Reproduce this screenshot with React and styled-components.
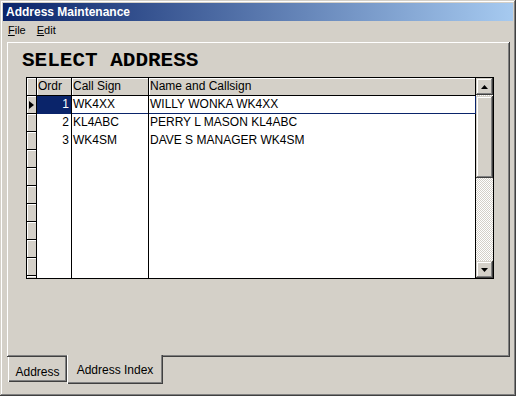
import React from "react";
import styled, { createGlobalStyle, css } from "styled-components";

const GlobalStyle = createGlobalStyle`
  html, body {
    margin: 0;
    padding: 0;
    background: #d4d0c8;
  }
  body {
    font-family: "Liberation Sans", Arial, sans-serif;
    font-size: 12px;
    color: #000;
  }
`;

const raised = css`
  box-shadow: inset -1px -1px #404040, inset 1px 1px #d4d0c8,
    inset -2px -2px #808080, inset 2px 2px #fff;
`;

const Frame = styled.div`
  width: 516px;
  height: 396px;
  box-sizing: border-box;
  padding: 3px;
  background: #d4d0c8;
  ${raised}
  display: flex;
  flex-direction: column;
`;

const TitleBar = styled.div`
  height: 18px;
  flex: none;
  padding-left: 3px;
  background: linear-gradient(to right, #0a246a, #a6caf0);
  color: #fff;
  font-weight: bold;
  font-size: 12px;
  line-height: 18px;
`;

const MenuBar = styled.div`
  height: 19px;
  flex: none;
  display: flex;
  gap: 11px;
  padding-left: 5px;
  font-size: 11px;
  line-height: 19px;
`;

const MenuItem = styled.span`
  u {
    text-decoration: underline;
  }
`;

const Body = styled.div`
  flex: 1;
  display: flex;
  flex-direction: column;
  padding: 2px 3px 0 4px;
`;

const Panel = styled.div`
  height: 315px;
  flex: none;
  box-sizing: border-box;
  padding: 8px 0 0 13px;
  box-shadow: inset -1px -1px #404040, inset 1px 1px #fff,
    inset -2px -2px #808080;
`;

const Heading = styled.h1`
  margin: 0 0 0 2px;
  font-family: "Liberation Mono", "Courier New", monospace;
  font-weight: bold;
  font-size: 21px;
  line-height: 21px;
`;

const GridBox = styled.div`
  width: 468px;
  height: 202px;
  box-sizing: border-box;
  margin: 6px 0 0 6px;
  border: 1px solid #000;
  display: flex;
  background: #fff;
`;

const Table = styled.div`
  width: 449px;
  display: grid;
  grid-template-columns: 10px 35px 77px 327px;
  grid-auto-rows: 18px;
  overflow: hidden;
  align-content: start;
`;

const HeadCell = styled.div`
  box-sizing: border-box;
  background: #d4d0c8;
  border-right: 1px solid #000;
  border-bottom: 1px solid #000;
  box-shadow: inset 1px 1px #fff;
  padding: 0 1px;
  line-height: 17px;
  white-space: nowrap;
`;

const Indicator = styled.div`
  box-sizing: border-box;
  background: #d4d0c8;
  border-right: 1px solid #000;
  border-bottom: 1px solid #000;
  box-shadow: inset 1px 1px #fff;
  display: flex;
  align-items: center;
  padding-left: 2px;
`;

const Pointer = styled.span`
  width: 0;
  height: 0;
  border-left: 5px solid #000;
  border-top: 4px solid transparent;
  border-bottom: 4px solid transparent;
`;

const Cell = styled.div`
  box-sizing: border-box;
  border-right: 1px solid ${(p) => (p.$edge ? "#0a246a" : "#000")};
  padding: ${(p) => (p.$right ? "0 2px 0 1px" : "0 1px")};
  line-height: 17px;
  white-space: nowrap;
  overflow: hidden;
  text-align: ${(p) => (p.$right ? "right" : "left")};
  ${(p) =>
    p.$focus &&
    css`
      box-shadow: inset 0 -1px #0a246a;
    `}
  ${(p) =>
    p.$selected &&
    css`
      background: #0a246a;
      color: #fff;
    `}
`;

const ScrollBar = styled.div`
  width: 17px;
  display: flex;
  flex-direction: column;
  background: repeating-conic-gradient(#fff 0 25%, #d4d0c8 0 50%) 0 0 / 2px
    2px;
`;

const SbButton = styled.div`
  height: 17px;
  flex: none;
  background: #d4d0c8;
  ${raised}
  display: flex;
  align-items: center;
  justify-content: center;
`;

const Thumb = styled.div`
  height: 82px;
  margin-top: 1px;
  flex: none;
  background: #d4d0c8;
  ${raised}
`;

const Track = styled.div`
  flex: 1;
`;

const TabRow = styled.div`
  display: flex;
  align-items: flex-start;
  padding-left: 1px;
  margin-top: -2px;
`;

const Tab = styled.div`
  box-sizing: border-box;
  background: #d4d0c8;
  text-align: center;
  font-size: 12px;
  line-height: 14px;
  padding-top: 8px;
  white-space: nowrap;
  box-shadow: inset 1px 0 #fff, inset -1px -1px #404040,
    inset -2px -2px #808080;
  ${(p) =>
    p.$active
      ? css`
          position: relative;
          z-index: 1;
          height: 29px;
        `
      : css`
          margin-top: 2px;
          height: 25px;
        `}
`;

const Arrow = ({ down }) => (
  <svg width="7" height="4" viewBox="0 0 7 4">
    <polygon points={down ? "0,0 7,0 3.5,4" : "0,4 7,4 3.5,0"} fill="#000" />
  </svg>
);

const records = [
  { ord: 1, call: "WK4XX", name: "WILLY WONKA WK4XX" },
  { ord: 2, call: "KL4ABC", name: "PERRY L MASON KL4ABC" },
  { ord: 3, call: "WK4SM", name: "DAVE S MANAGER WK4SM" },
];

const rows = Array.from({ length: 11 }, (_, i) => records[i] || null);

export default function App() {
  return (
    <>
      <GlobalStyle />
      <Frame>
        <TitleBar>Address Maintenance</TitleBar>
        <MenuBar>
          <MenuItem>
            <u>F</u>ile
          </MenuItem>
          <MenuItem>
            <u>E</u>dit
          </MenuItem>
        </MenuBar>
        <Body>
          <Panel>
            <Heading>SELECT ADDRESS</Heading>
            <GridBox>
              <Table>
                <HeadCell />
                <HeadCell>Ordr</HeadCell>
                <HeadCell>Call Sign</HeadCell>
                <HeadCell>Name and Callsign</HeadCell>
                {rows.map((r, i) => {
                  const focus = i === 0;
                  return (
                    <React.Fragment key={i}>
                      <Indicator>{focus && <Pointer />}</Indicator>
                      <Cell $right $focus={focus} $selected={focus}>
                        {r ? r.ord : ""}
                      </Cell>
                      <Cell $focus={focus}>{r ? r.call : ""}</Cell>
                      <Cell $focus={focus} $edge={focus}>
                        {r ? r.name : ""}
                      </Cell>
                    </React.Fragment>
                  );
                })}
              </Table>
              <ScrollBar>
                <SbButton>
                  <Arrow />
                </SbButton>
                <Thumb />
                <Track />
                <SbButton>
                  <Arrow down />
                </SbButton>
              </ScrollBar>
            </GridBox>
          </Panel>
          <TabRow>
            <Tab style={{ width: 59 }}>Address</Tab>
            <Tab $active style={{ width: 96 }}>
              Address Index
            </Tab>
          </TabRow>
        </Body>
      </Frame>
    </>
  );
}
